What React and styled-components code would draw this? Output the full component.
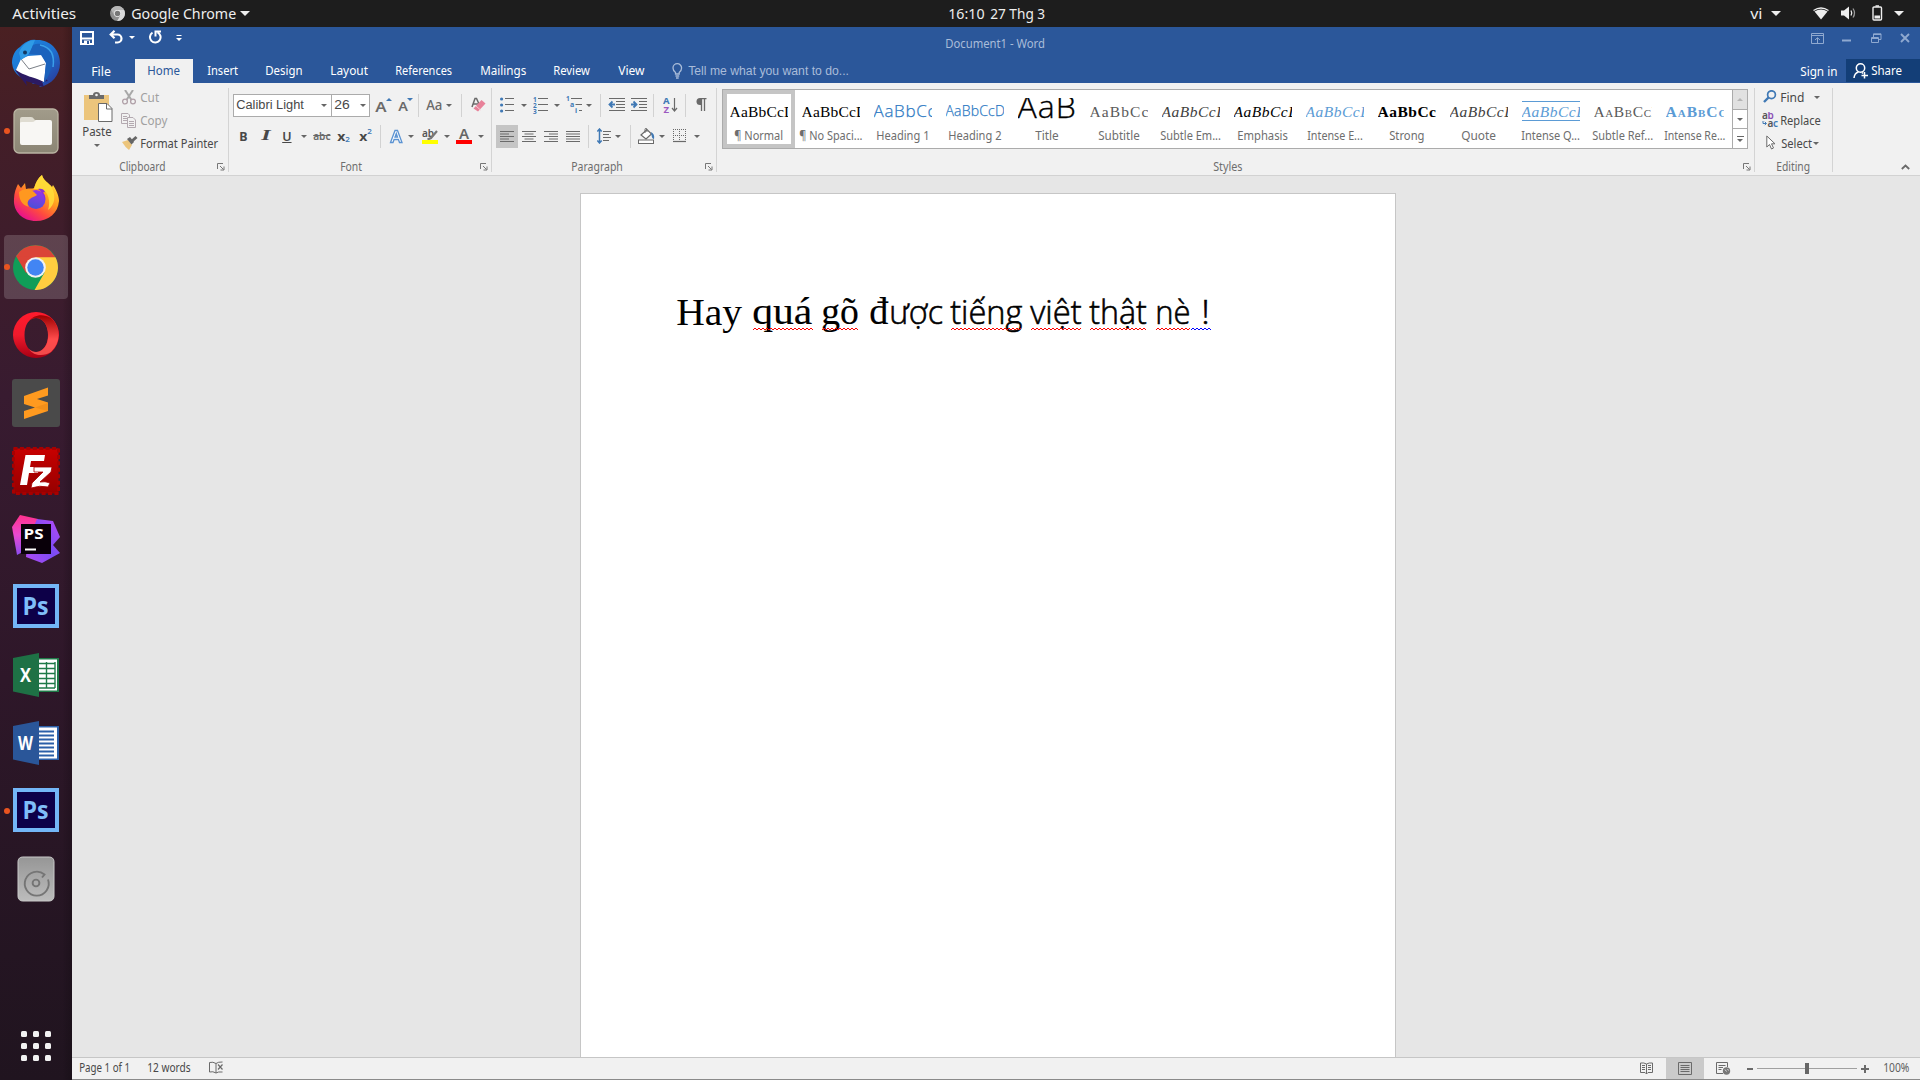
import React, { useLayoutEffect, useRef, useState } from "react";
import styled, { createGlobalStyle, css } from "styled-components";

const UI = '"Noto Sans", "Open Sans", sans-serif';
const SERIF = '"Liberation Serif", serif';
const LIGHT = '"Open Sans", "Noto Sans", sans-serif';
const SANS = '"Liberation Sans", Arial, sans-serif';

const Global = createGlobalStyle`
  * { box-sizing: border-box; }
  body { margin: 0; background: #e6e6e6; overflow: hidden; }
`;

/* ---------- shared pieces ---------- */
const Screen = styled.div`
  width: 1920px;
  height: 1080px;
  display: flex;
  flex-direction: column;
  overflow: hidden;
  font-family: ${UI};
  font-size: 12px;
`;

const LabelBox = styled.span`
  display: inline-block;
  flex: none;
  width: ${(p) => p.$w}px;
  margin-left: ${(p) => p.$g || 0}px;
  margin-top: ${(p) => p.$mt || 0}px;
  font-family: ${(p) => p.$font || UI};
  font-size: ${(p) => p.$size || 12}px;
  font-weight: ${(p) => p.$weight || 400};
  font-style: ${(p) => (p.$italic ? "italic" : "normal")};
  text-decoration: ${(p) => p.$deco || "none"};
  color: ${(p) => p.$color || "#484848"};
  line-height: ${(p) => p.$lh || 18}px;
  -webkit-text-stroke: ${(p) => p.$stroke || 0}px currentColor;
  white-space: pre;
`;
const LabelText = styled.span`
  display: inline-block;
  text-decoration: inherit;
  transform-origin: 0 50%;
`;

/* Text condensed or widened to fill the given width, side bearings hanging out. */
const BEARING = 0.8;
function Label({ children, ...rest }) {
  const ref = useRef(null);
  const [scale, setScale] = useState(1);
  useLayoutEffect(() => {
    if (ref.current.offsetWidth) setScale((rest.$w + 2 * BEARING) / ref.current.offsetWidth);
  }, [rest.$w, children]);
  return (
    <LabelBox {...rest}>
      <LabelText ref={ref} style={{ transform: `translateX(-${BEARING}px) scaleX(${scale})` }}>{children}</LabelText>
    </LabelBox>
  );
}

const Svg = styled.svg`
  display: block;
  flex: none;
  width: ${(p) => p.$w}px;
  height: ${(p) => p.$h}px;
  margin-left: ${(p) => p.$g || 0}px;
  margin-top: ${(p) => p.$mt || 0}px;
`;
function Icon({ w, h, g, mt, children, box }) {
  return (
    <Svg $w={w} $h={h} $g={g} $mt={mt} viewBox={box || `0 0 ${w} ${h}`} fill="none">
      {children}
    </Svg>
  );
}

const Caret = styled.i`
  flex: none;
  width: 0;
  height: 0;
  margin-left: ${(p) => p.$g || 0}px;
  margin-top: ${(p) => p.$mt || 0}px;
  border: solid transparent;
  border-width: ${(p) => p.$s || 3}px ${(p) => p.$s || 3}px 0;
  border-top-color: ${(p) => p.$c || "#666"};
`;
const UpCaret = styled(Caret)`
  transform: rotate(180deg);
`;
const PasteCaret = styled(Caret)`
  display: block;
  margin: 3px 0 0 11px;
`;

/* ---------- desktop top bar ---------- */
const TopBar = styled.header`
  flex: none;
  height: 27px;
  display: flex;
  align-items: center;
  background: #1d1d1d;
`;

const Body = styled.div`
  flex: 1;
  display: flex;
  min-height: 0;
`;

/* ---------- dock ---------- */
const Dock = styled.nav`
  flex: none;
  width: 72px;
  padding: 4px 4px 0;
  display: flex;
  flex-direction: column;
  gap: 4px;
  background: linear-gradient(90deg, transparent 62px, rgba(0, 0, 0, 0.18)),
    linear-gradient(#4a2022 0, #431e28 10%, #381b30 35%, #2e1729 62%, #241522 88%, #20141f 100%);
`;
const Tile = styled.div`
  position: relative;
  flex: none;
  width: 64px;
  height: 64px;
  display: flex;
  align-items: center;
  justify-content: center;
  border-radius: 4px;
  background: ${(p) => (p.$on ? "rgba(255,255,255,.17)" : "transparent")};
  &::before {
    content: "";
    display: ${(p) => (p.$run ? "block" : "none")};
    position: absolute;
    left: 0;
    top: 29px;
    width: 6px;
    height: 6px;
    border-radius: 50%;
    background: #e95420;
  }
`;
const AppsTile = styled(Tile)`
  margin-top: 99px;
`;

const Thunderbird = () => (
  <Icon w={48} h={48} mt={-1}>
    <defs>
      <linearGradient id="tb" x1="0" y1="0" x2="1" y2="1">
        <stop offset="0" stopColor="#1c8be0" /><stop offset=".55" stopColor="#1f6fd0" /><stop offset="1" stopColor="#2a2f8f" />
      </linearGradient>
    </defs>
    <path d="M10 6C15 2 19 0 24 1 37 0 48 10 48 24 48 36 40 46 27 48L31 44 20 45 23 42C11 41 1 36 0 24 0 17 3 11 8 8Z" fill="url(#tb)" />
    <path d="M3 31 15 47 14 42 32 48 30 43 36 42 30 36Z" fill="#2b1a63" />
    <path d="M9 20 16 17 30 16 34 24 32 43C22 38 12 37 4 31Z" fill="#fff" />
    <path d="M9 20 17 30 33 25" stroke="#6a6f78" strokeWidth=".9" />
    <path d="M7 14C10 5 17 1 23 1L21 6C19 12 17 16 12 19L9 21Z" fill="#2f9be6" />
    <path d="M21 6C31 2 40 9 40 20 40 28 38 36 32 44L34 24 29 16 17 15Z" fill="#1b62bd" />
    <path d="M28 6C38 8 43 15 41 28" stroke="#3aa0ea" strokeWidth="1.500" />
    <circle cx="13" cy="13.500" r="2" fill="#123a63" />
  </Icon>
);
const Files = () => (
  <Icon w={46} h={46}>
    <defs>
      <linearGradient id="fl" x1="0" y1="0" x2="0" y2="1"><stop offset="0" stopColor="#a19b8a" /><stop offset="1" stopColor="#8b8574" /></linearGradient>
    </defs>
    <rect x="1" y="1" width="44" height="44" rx="5" fill="url(#fl)" stroke="#bab4a2" strokeWidth="1.300" />
    <path d="M7 12V11Q7 9 9 9H18Q20 9 21 11L22 12H37V20H7Z" fill="#dfdcd1" />
    <path d="M7 15Q7 14 9 14H19Q21 14 22 12.700L23 12H37Q39 12 39 14V35Q39 37 37 37H9Q7 37 7 35Z" fill="#f8f7f4" />
  </Icon>
);
const Firefox = () => (
  <Icon w={48} h={48} mt={-3}>
    <defs>
      <linearGradient id="ff" x1=".85" y1=".1" x2=".25" y2=".95"><stop offset="0" stopColor="#ffe53b" /><stop offset=".4" stopColor="#ff9a1f" /><stop offset=".7" stopColor="#ff4b3e" /><stop offset="1" stopColor="#e8128a" /></linearGradient>
      <linearGradient id="fg" x1=".7" y1="0" x2=".4" y2="1"><stop offset="0" stopColor="#9a35e8" /><stop offset="1" stopColor="#4a50d8" /></linearGradient>
    </defs>
    <path d="M6 10 9 14 13 9 14 15C17 14 20 15 22 14 24 8 26 4 30 1 31 6 37 9 40 13L41 11C45 17 47 23 47 27 46 39 37 47 24 47 11 47 1 38 2 25 2 19 4 14 6 10Z" fill="url(#ff)" />
    <path d="M22 15C24 8 26 4 30 1 31 7 37 9 40 14 44 22 43 31 36 36 39 27 36 18 30 15Z" fill="#ffdc38" opacity=".9" />
    <circle cx="24" cy="25.500" r="9.500" fill="url(#fg)" />
    <path d="M26 15C29 14 32 15 33 18L31 18.500Q34 22 33 26 31 18 26 15Z" fill="#8c30d8" />
    <path d="M7 18C12 14 18 14 22 18L25 21C22 23 20 23 18 25 15 27 15 31 17 33 10 31 7 26 7 18Z" fill="#ff9820" />
  </Icon>
);
const Chrome = ({ size = 45, grey, g }) => (
  <Icon w={size} h={size} box="0 0 48 48" g={g}>
    <circle cx="24" cy="24" r="24" fill={grey ? "#8f8f8f" : "#109d58"} />
    <path d="M24 24 3.300 12A24 24 0 0 1 45 13Z" fill={grey ? "#b5b5b5" : "#db4437"} />
    <path d="M24 13H45.300A24 24 0 0 1 23 48L33.500 29.500Z" fill={grey ? "#dadada" : "#ffcd40"} />
    <path d="M3.300 12 14 30 24 13Z" fill={grey ? "#b5b5b5" : "#db4437"} />
    <circle cx="24" cy="24" r="11" fill="#f1f1f1" />
    <circle cx="24" cy="24" r="8.800" fill={grey ? "#777" : "#4285f4"} />
  </Icon>
);
const Opera = () => (
  <Icon w={48} h={48} mt={-1}>
    <defs>
      <linearGradient id="oa" x1="0" y1="0" x2="0" y2="1"><stop offset="0" stopColor="#ff1b2d" /><stop offset=".5" stopColor="#f01a2c" /><stop offset="1" stopColor="#a70014" /></linearGradient>
      <linearGradient id="ob" x1="0" y1="0" x2="0" y2="1"><stop offset="0" stopColor="#9c0000" /><stop offset=".6" stopColor="#ff4b4b" /><stop offset="1" stopColor="#f04b4b" /></linearGradient>
    </defs>
    <path fillRule="evenodd" d="M24 1A23 23 0 1 0 24 47 23 23 0 1 0 24 1ZM24 7C31 7 36 14 36 24S31 41 24 41 12.500 34 12.500 24 17 7 24 7Z" fill="url(#oa)" />
    <path d="M17 10C21 4 31 2 39 7A23 23 0 0 1 39 41C33 45 22 46 17 38 21 42 27 42 31 38 38 32 38 16 31 10 27 6 21 6 17 10Z" fill="url(#ob)" />
  </Icon>
);
const Sublime = () => (
  <Icon w={48} h={48}>
    <rect width="48" height="48" rx="3" fill="#4a4a4a" />
    <path d="M12 17 36 8.500V16.500L25 20 36 23.500V32L12 40V32L23 28.500 12 25Z" fill="#ff9a1f" />
    <path d="M23 28.500 36 24V32L32 31Z" fill="#d97a10" opacity=".35" />
  </Icon>
);
const FileZilla = () => (
  <Icon w={48} h={48}>
    <defs><linearGradient id="fz" x1="0" y1="0" x2="0" y2="1"><stop offset="0" stopColor="#c80000" /><stop offset="1" stopColor="#960000" /></linearGradient></defs>
    <rect x="1.500" y="1.500" width="45" height="45" fill="url(#fz)" stroke="#a80000" strokeWidth="3" strokeDasharray="4 2.430" />
    <path d="M13.500 8H33L32 14H19L18 20H27L26 26H17L15 38H8Z" fill="#fff" />
    <path d="M22 20H40L39 25 28 35Q33 34 38 36L36 40Q28 38 19 41L20 36 31 25H22Z" fill="#fff" stroke="#a80000" strokeWidth=".8" />
  </Icon>
);
const PhpStorm = () => (
  <Icon w={48} h={48}>
    <defs>
      <linearGradient id="p1" x1="0" y1="0" x2="0" y2="1"><stop offset="0" stopColor="#ff318c" /><stop offset=".5" stopColor="#e84ad0" /><stop offset="1" stopColor="#8b4cf0" /></linearGradient>
      <linearGradient id="p2" x1="1" y1="0" x2="0" y2="1"><stop offset="0" stopColor="#b74af7" /><stop offset=".5" stopColor="#7a4cf5" /><stop offset="1" stopColor="#b24af0" /></linearGradient>
    </defs>
    <path d="M0 12 8 0 26 4 24 30 5 40Z" fill="url(#p1)" />
    <path d="M25 4 41 6 48 22 41 30 48 38 30 48 14 42 15 28Z" fill="url(#p2)" />
    <rect x="9" y="9" width="30" height="30" fill="#090009" />
    <text x="11.500" y="24" fontFamily="Open Sans, sans-serif" fontWeight="700" fontSize="15" textLength="20" lengthAdjust="spacingAndGlyphs" fill="#fff">PS</text>
    <path d="M13 34.500H24" stroke="#fff" strokeWidth="2" />
  </Icon>
);
const Photoshop = () => (
  <Icon w={46} h={44} mt={-2}>
    <rect x="2" y="2" width="42" height="40" fill="#0d0048" stroke="#73b6f7" strokeWidth="4" />
    <text x="9.500" y="30.500" fontFamily="Open Sans, sans-serif" fontWeight="700" fontSize="25" textLength="26" lengthAdjust="spacingAndGlyphs" fill="#7fbdf9">Ps</text>
  </Icon>
);
const Office = ({ color, dark, letter, grid }) => (
  <Icon w={46} h={44}>
    <rect x="20" y="5" width="26" height="34" fill={color} />
    <rect x="24" y="6.500" width="20" height="31" fill="#fff" />
    {grid ? (
      <>
        <path d="M26 10.500H42M26 15.500H42M26 20.500H42M26 25.500H42M26 30.500H42M26 35H42" stroke={color} strokeWidth="1.400" />
        <path d="M33.500 9V35M42 9V35" stroke={color} strokeWidth="1.400" />
      </>
    ) : (
      <path d="M24 10.500H41M24 14.500H41M24 18.500H41M24 22.500H41M24 26.500H41M24 30.500H41M24 34.500H41" stroke={color} strokeWidth="2" />
    )}
    <path d="M0 5 26 0V44L0 38.500Z" fill={dark} />
    <text x={grid ? 7 : 5} y="29" fontFamily="Open Sans, sans-serif" fontWeight="700" fontSize="20" textLength={grid ? 11 : 15} lengthAdjust="spacingAndGlyphs" fill="#fff">{letter}</text>
  </Icon>
);
const Disk = () => (
  <Icon w={38} h={46}>
    <defs><linearGradient id="dk" x1="0" y1="0" x2="0" y2="1"><stop offset="0" stopColor="#969696" /><stop offset="1" stopColor="#bcbcbc" /></linearGradient></defs>
    <rect x="1" y="1" width="36" height="44" rx="4.500" fill="url(#dk)" stroke="#c9c9c9" />
    <path d="M31 23.500A12 12 0 1 1 27.500 18.500L25 21.500" stroke="#757575" strokeWidth="1.900" />
    <circle cx="19" cy="27" r="3.400" stroke="#757575" strokeWidth="1.900" />
  </Icon>
);
const AppGrid = () => (
  <Icon w={30} h={30}>
    {[0, 12, 24].map((y) => [0, 12, 24].map((x) => <rect key={`${x}-${y}`} x={x} y={y} width="6" height="6" rx="1.500" fill="#f2f2f2" />))}
  </Icon>
);

/* ---------- Word window ---------- */
const Window = styled.main`
  flex: 1;
  min-width: 0;
  display: flex;
  flex-direction: column;
  background: #e6e6e6;
`;
const Head = styled.div`
  flex: none;
  height: 56px;
  background: #2b579a;
  display: flex;
  flex-direction: column;
`;
const TitleRow = styled.div`
  height: 32px;
  display: flex;
  align-items: flex-start;
  padding-left: 8px;
`;
const TabRow = styled.div`
  height: 24px;
  display: flex;
  align-items: center;
`;
const ActiveTab = styled.div`
  width: 58px;
  height: 24px;
  margin-left: 24.5px;
  padding-left: 13px;
  display: flex;
  align-items: center;
  background: #f1f1f1;
`;
const ShareButton = styled.div`
  width: 74px;
  height: 23px;
  margin: 0 0 1px 10px;
  padding-left: 7px;
  display: flex;
  align-items: center;
  background: #133e77;
`;
const Ribbon = styled.div`
  flex: none;
  height: 93px;
  display: flex;
  background: #f1f1f1;
  border-bottom: 1px solid #d2d2d2;
`;
const Group = styled.section`
  flex: none;
  width: ${(p) => p.$w}px;
  display: flex;
  flex-direction: column;
  padding-top: 7px;
  background: linear-gradient(#d4d4d4, #d4d4d4) right 0 top 5px / 1px 84px no-repeat;
`;
const Row = styled.div`
  flex: none;
  height: ${(p) => p.$h || 30}px;
  padding-left: ${(p) => p.$pl || 0}px;
  margin-top: ${(p) => p.$mt || 0}px;
  display: flex;
  align-items: center;
`;
const Foot = styled.div`
  height: 17px;
  margin-top: auto;
  padding-left: ${(p) => p.$pl}px;
  display: flex;
  align-items: center;
`;
const Sep = styled.i`
  flex: none;
  width: 1px;
  height: 23px;
  margin-left: ${(p) => p.$g}px;
  background: #d2d2d2;
`;
const Combo = styled.div`
  flex: none;
  width: ${(p) => p.$w}px;
  height: 23px;
  margin-left: ${(p) => p.$g || 0}px;
  padding-left: 3px;
  display: flex;
  align-items: center;
  background: #fff;
  border: 1px solid #ababab;
`;
const Pressed = styled.div`
  flex: none;
  width: 22px;
  height: 23px;
  display: flex;
  align-items: center;
  justify-content: center;
  background: #c5c5c5;
`;
const ClipBody = styled.div`
  display: flex;
  height: 69px;
  margin-top: -4px;
`;
const PasteCol = styled.div`
  width: 45px;
  padding: 5px 0 0 11px;
`;
const Launcher = ({ g }) => (
  <Icon w={8} h={8} g={g}>
    <path d="M.5 6V.5H6M3 3 6.500 6.500M7 3.500V7H3.500" stroke="#777" />
  </Icon>
);

const Gallery = styled.div`
  display: flex;
  width: 1026px;
  height: 60px;
  margin: -1px 0 0 5px;
  border: 1px solid #ababab;
  background: #fff;
`;
const Style = styled.div`
  width: 72px;
  height: 58px;
  flex: none;
  padding: ${(p) => (p.$on ? "4px 3px" : "8px 7px")};
  border: ${(p) => (p.$on ? "4px solid #c5c5c5" : "0")};
`;
const Sample = styled.div`
  width: 58px;
  height: 23px;
  overflow: hidden;
  white-space: pre;
  text-indent: -0.5px;
  color: ${(p) => p.$c || "#000"};
  font-family: ${(p) => (p.$serif ? SERIF : LIGHT)};
  font-size: ${(p) => p.$s || 15.5}px;
  line-height: ${(p) => p.$l || 28.5}px;
  font-weight: ${(p) => p.$wt || (p.$serif ? 400 : 300)};
  font-style: ${(p) => (p.$i ? "italic" : "normal")};
  letter-spacing: ${(p) => p.$ls || 0}px;
  font-variant: ${(p) => (p.$sc ? "small-caps" : "normal")};
  -webkit-text-stroke: ${(p) => p.$st || 0}px currentColor;
  ${(p) => p.$lines && css`
    background: linear-gradient(#5b9bd5, #5b9bd5) 0 3px / 58px 1px no-repeat,
      linear-gradient(#5b9bd5, #5b9bd5) 0 22px / 58px 1px no-repeat;
  `}
`;
const StyleName = styled.div`
  width: 58px;
  margin: 6px 0 0 -0.5px;
  display: flex;
  justify-content: center;
`;
const Scroller = styled.div`
  width: 15px;
  margin-left: auto;
  display: flex;
  flex-direction: column;
  border-left: 1px solid #ababab;
`;
const ScrollButton = styled.div`
  flex: 1;
  display: flex;
  flex-direction: column;
  gap: 2px;
  align-items: center;
  justify-content: center;
  background: ${(p) => (p.$off ? "#e1e1e1" : "#fff")};
  border-top: ${(p) => (p.$off ? "0" : "1px solid #ababab")};
`;
const Dash = styled.i`
  width: 7px;
  height: 1px;
  background: #666;
`;

const Canvas = styled.div`
  flex: 1;
  min-height: 0;
  display: flex;
  padding: 17px 0 0 508px;
`;
const Page = styled.article`
  width: 816px;
  border: 1px solid #c6c6c6;
  border-bottom: 0;
  background: #fff;
  padding: 95px 0 0 96px;
`;
const Line = styled.div`
  display: flex;
  align-items: flex-start;
`;
const Word = styled.span`
  position: relative;
  flex: none;
  display: flex;
  margin-left: ${(p) => p.$g || 0}px;
`;
const Squiggle = styled.svg`
  position: absolute;
  left: ${(p) => p.$x || 0}px;
  top: 38px;
  height: 4px;
  width: ${(p) => p.$w}px;
`;
function Wave({ w, x, color = "#f00" }) {
  let d = "M0 3";
  for (let i = 2; i <= w; i += 2) d += `L${i} ${i % 4 ? 1 : 3}`;
  return <Squiggle $w={w} $x={x}><path d={d} fill="none" stroke={color} strokeWidth="1" /></Squiggle>;
}
const SerifRun = (p) => <Label $lh={46} $size={37} $font={SERIF} $color="#000" {...p} />;
const SansRun = (p) => <Label $lh={46} $size={33} $font={LIGHT} $weight={300} $stroke={0.6} $color="#000" {...p} />;

const Status = styled.footer`
  flex: none;
  height: 23px;
  display: flex;
  align-items: center;
  background: #f1f1f1;
  border-top: 1px solid #c6c6c6;
  border-bottom: 1px solid #8a8a8a;
`;
const ViewOn = styled.div`
  width: 38px;
  height: 21px;
  margin-left: 12px;
  display: flex;
  align-items: center;
  justify-content: center;
  background: #cacaca;
`;
const Track = styled.div`
  width: 100px;
  height: 1px;
  margin-left: 4px;
  background: #a0a0a0;
  display: flex;
  align-items: center;
  justify-content: center;
`;
const Thumb = styled.i`
  flex: none;
  width: 4px;
  height: 11px;
  background: #666;
`;
const Fill = styled.span`
  flex: 1;
`;

const G = "#6a6a6a";
const B = "#4079b5";

const STYLES = [
  { n: "¶ Normal", w: 47, t: { $serif: true, $ls: 0.2 }, on: true },
  { n: "¶ No Spaci...", w: 62, t: { $serif: true, $ls: 0.2 } },
  { n: "Heading 1", w: 52, t: { $c: "#2e7ac4", $s: 17, $l: 26, $ls: 0.7, $st: 0.25 } },
  { n: "Heading 2", w: 52, t: { $c: "#2e7ac4", $s: 14, $l: 26, $ls: 0.2, $st: 0.25 } },
  { n: "Title", w: 22, t: { $s: 32, $l: 15, $ls: 1, $st: 0.35 } },
  { n: "Subtitle", w: 40, t: { $serif: true, $c: "#5a5a5a", $ls: 1.1 } },
  { n: "Subtle Em...", w: 59, t: { $serif: true, $i: true, $c: "#404040", $ls: 0.5 } },
  { n: "Emphasis", w: 49, t: { $serif: true, $i: true, $ls: 0.5 } },
  { n: "Intense E...", w: 54, t: { $serif: true, $i: true, $c: "#5b9bd5", $ls: 0.5 } },
  { n: "Strong", w: 34, t: { $serif: true, $wt: 700, $ls: 0.5 } },
  { n: "Quote", w: 33, t: { $serif: true, $i: true, $c: "#404040", $ls: 0.5 } },
  { n: "Intense Q...", w: 57, t: { $serif: true, $i: true, $c: "#5b9bd5", $lines: true, $ls: 0.5 } },
  { n: "Subtle Ref...", w: 59, t: { $serif: true, $sc: true, $c: "#5a5a5a", $ls: 0.6 } },
  { n: "Intense Re...", w: 60, t: { $serif: true, $sc: true, $c: "#5b9bd5", $wt: 700, $ls: 1 } },
];

const Lines = ({ rows, g }) => (
  <Icon w={14} h={13} g={g}>
    {rows.map(([a, b], i) => <path key={i} d={`M${a} ${i * 2.5 + 1.5}H${b}`} stroke={G} strokeWidth="1" />)}
  </Icon>
);

function ClipboardGroup() {
  return (
    <Group $w={157}>
      <ClipBody>
        <PasteCol>
          <Icon w={30} h={31} g={1} mt={1}>
            <rect x="0" y="3" width="25" height="25" fill="#ecc57c" />
            <path d="M5 7V3H9Q9 0 12.500 0T16 3H20V7Z" fill="#6a6a6a" />
            <circle cx="12.500" cy="3" r="1.300" fill="#f1f1f1" />
            <path d="M14.500 11.500H23L28 16.500V29.500H14.500Z" fill="#fff" stroke="#6a6a6a" />
            <path d="M22.500 11.500V17H28" stroke="#6a6a6a" />
          </Icon>
          <Label $w={28} $lh={18}>Paste</Label>
          <PasteCaret />
        </PasteCol>
        <div>
          <Row $h={23} $pl={5}>
            <Icon w={14} h={15}>
              <path d="M3 0 9.500 10M11 0 4.500 10" stroke="#a8a8a8" strokeWidth="2" />
              <circle cx="3" cy="11.500" r="2.400" stroke="#b0a0a8" strokeWidth="1.300" /><circle cx="11" cy="11.500" r="2.400" stroke="#b0a0a8" strokeWidth="1.300" />
            </Icon>
            <Label $g={5} $w={17} $color="#a0a0a0">Cut</Label>
          </Row>
          <Row $h={23} $pl={4}>
            <Icon w={16} h={15}>
              <path d="M.5.5H7L8.500 2V10.500H.5ZM2 3.500H6M2 5.500H6M2 7.500H6" stroke="#b3a9b0" />
              <path d="M6.500 4.500H12L14.500 7V14.500H6.500Z" fill="#f1f1f1" stroke="#b3a9b0" /><path d="M8 8.500H13M8 10.500H13M8 12.500H13" stroke="#b3a9b0" />
            </Icon>
            <Label $g={4} $w={25.5} $color="#a0a0a0">Copy</Label>
          </Row>
          <Row $h={23} $pl={5}>
            <Icon w={16} h={14} mt={-2}>
              <path d="M0 6 6 4 10 9 7 14Q3 11 0 6Z" fill="#ecc57c" />
              <path d="M5 3 8 1 12 6 9.500 8.500Z" fill="#666" /><path d="M9 4 13.500 0 15.500 2 11 6Z" fill="#666" />
            </Icon>
            <Label $g={3} $w={76}>Format Painter</Label>
          </Row>
        </div>
      </ClipBody>
      <Foot $pl={47.5}><Label $w={45} $color="#6e6e6e">Clipboard</Label><Launcher g={52} /></Foot>
    </Group>
  );
}

function FontGroup() {
  return (
    <Group $w={263}>
      <Row $pl={4}>
        <Combo $w={99}><Label $w={66} $size={12.5} $font={SANS}>Calibri Light</Label><Caret $g={17.5} /></Combo>
        <Combo $w={39} $g={-1}><Label $w={14} $size={12.5} $font={SANS}>26</Label><Caret $g={10.5} /></Combo>
        <Label $g={6} $w={10} $size={14.5} $weight={600} $color={G} $mt={2}>A</Label>
        <UpCaret $c={B} $mt={-11} />
        <Label $g={6.5} $w={8} $size={12} $weight={600} $color={G} $mt={4}>A</Label>
        <Caret $c={B} $mt={-11} />
        <Sep $g={5.5} />
        <Label $g={8} $w={15} $size={13.5} $weight={500} $color={G}>Aa</Label>
        <Caret $g={4} />
        <Sep $g={8.5} />
        <Icon w={15} h={16} g={9}>
          <path d="M1 10 4 1.500H5.500L8.500 8M2.500 7H7" stroke={G} strokeWidth="1.500" />
          <path d="M2.500 11.500 10.500 3 14.500 6.500 7 14.500Z" fill="#e8829a" />
          <path d="M5 9 9.500 13" stroke="#f6c8d2" />
        </Icon>
      </Row>
      <Row $pl={11} $mt={1}>
        <Label $w={7} $weight={700} $size={13}>B</Label>
        <Label $g={15} $w={7} $weight={700} $italic $size={14} $font={SERIF}>I</Label>
        <Label $g={14} $w={8} $weight={600} $size={13} $deco="underline">U</Label>
        <Caret $g={10} />
        <Label $g={7} $w={16} $size={11.5} $weight={600} $color={G} $deco="line-through">abc</Label>
        <Label $g={8} $w={7} $size={13} $weight={700}>x</Label><Label $g={1} $w={3} $size={7} $color={B} $weight={600} $mt={8}>2</Label>
        <Label $g={11} $w={7} $size={13} $weight={700}>x</Label><Label $g={1} $w={3} $size={7} $color={B} $weight={600} $mt={-8}>2</Label>
        <Sep $g={9} />
        <Icon w={15} h={15} g={8}>
          <path d="M1.500 13.500 6 1.500H8.500L13 13.500H10.500L9.400 10.500H5.100L4 13.500ZM6 8H8.500L7.300 4.500Z" fill="#fff" stroke="#5b93d2" strokeWidth="1.300" />
        </Icon>
        <Caret $g={4} />
        <Icon w={16} h={17} g={7.5}>
          <text x="0" y="8.500" fontFamily="Noto Sans, sans-serif" fontWeight="600" fontSize="10" fill="#555">ab</text>
          <path d="M15 3 9 10 5.500 11.500" stroke="#777" strokeWidth="2.200" />
          <rect y="12" width="16" height="4" fill="#ff0" />
        </Icon>
        <Caret $g={6} />
        <Icon w={16} h={17} g={6.5}>
          <text x="3" y="11" fontFamily="Noto Sans, sans-serif" fontWeight="600" fontSize="15" fill="#666">A</text>
          <rect y="12" width="16" height="4" fill="#f00" />
        </Icon>
        <Caret $g={6} />
      </Row>
      <Foot $pl={112}><Label $w={20} $color="#6e6e6e">Font</Label><Launcher g={119} /></Foot>
    </Group>
  );
}

function ParagraphGroup() {
  return (
    <Group $w={225}>
      <Row $pl={8}>
        <Icon w={14} h={16}>
          {[2, 8, 14].map((y) => <g key={y}><circle cx="1.600" cy={y} r="1.600" fill={B} /><path d={`M5 ${y - 0.5}H14`} stroke={G} /></g>)}
        </Icon>
        <Caret $g={6.5} />
        <Icon w={15} h={18} g={6.5}>
          {[2, 8, 14].map((y, i) => <g key={y}><text x="0" y={y + 3.5} fontSize="6.500" fontWeight="700" fontFamily="Noto Sans, sans-serif" fill={B}>{i + 1}</text><path d={`M5 ${y + 0.5}H15`} stroke={G} /></g>)}
        </Icon>
        <Caret $g={6} />
        <Icon w={17} h={18} g={6}>
          <text x="0" y="5" fontSize="6.500" fontWeight="700" fontFamily="Noto Sans, sans-serif" fill={B}>1</text>
          <text x="4" y="11" fontSize="7" fontWeight="700" fontFamily="Noto Sans, sans-serif" fill={B}>a</text>
          <text x="9" y="17" fontSize="7" fontWeight="700" fontFamily="Noto Sans, sans-serif" fill={B}>i</text>
          <path d="M5 2.500H16M9.500 8.500H16M13 14.500H16" stroke={G} />
        </Icon>
        <Caret $g={3} />
        <Sep $g={8} />
        <Icon w={17} h={14} g={7}>
          <path d="M1 .5H17M8 3.500H17M8 6.500H17M8 9.500H17M1 12.500H17" stroke={G} /><path d="M7 6.500H2M4.500 3.500 1.500 6.500 4.500 9.500" stroke={B} strokeWidth="1.800" />
        </Icon>
        <Icon w={17} h={14} g={5}>
          <path d="M1 .5H17M9 3.500H17M9 6.500H17M9 9.500H17M1 12.500H17" stroke={G} /><path d="M1 6.500H6M3.500 3.500 6.500 6.500 3.500 9.500" stroke={B} strokeWidth="1.800" />
        </Icon>
        <Sep $g={6} />
        <Icon w={15} h={18} g={8.5}>
          <text x="0" y="8" fontSize="9.500" fontWeight="700" fontFamily="Noto Sans, sans-serif" fill={B}>A</text>
          <text x="0.500" y="16.500" fontSize="9.500" fontWeight="700" fontFamily="Noto Sans, sans-serif" fill="#9b59c0">Z</text>
          <path d="M11.500 2V15M9 12 11.500 15 14 12" stroke={G} strokeWidth="1.200" />
        </Icon>
        <Sep $g={7.5} />
        <Icon w={11} h={14} g={9.5}>
          <path d="M5 .5H10.500M5.500 0V13M8.500 0V13" stroke={G} strokeWidth="1.300" /><path d="M6 0H4A3.500 3.500 0 0 0 4 7H6Z" fill={G} />
        </Icon>
      </Row>
      <Row $pl={4} $mt={1}>
        <Pressed><Lines rows={[[0, 14], [0, 9], [0, 14], [0, 9], [0, 14]]} /></Pressed>
        <Lines g={4} rows={[[0, 14], [2.5, 11.5], [0, 14], [2.5, 11.5], [0, 14]]} />
        <Lines g={8} rows={[[0, 14], [5, 14], [0, 14], [5, 14], [0, 14]]} />
        <Lines g={8} rows={[[0, 14], [0, 14], [0, 14], [0, 14], [0, 14]]} />
        <Sep $g={8} />
        <Icon w={15} h={16} g={8}>
          <path d="M2.500 1V15M.3 3.500 2.500 1 4.700 3.500M.3 12.500 2.500 15 4.700 12.500" stroke={B} strokeWidth="1.500" />
          <path d="M6 3.500H14M6 6.500H12M6 9.500H14M6 12.500H12" stroke={G} />
        </Icon>
        <Caret $g={3} />
        <Sep $g={9} />
        <Icon w={17} h={16} g={7}>
          <rect x=".5" y="12" width="15" height="3.500" fill="#fff" stroke={G} />
          <path d="M3 7 9 1.500 13.500 6 8 11Z" fill="#fff" stroke={G} strokeWidth="1.200" /><path d="M7 5V1.500Q7 0 8.500 .5L9 4" stroke={G} />
          <path d="M13 4Q17 6 16 11 14 11 13.500 7Z" fill={B} />
        </Icon>
        <Caret $g={4} />
        <Icon w={14} h={14} g={8}>
          <path d="M.5 0V12M6.500 0V12M12.500 0V12M0 .5H13M0 6.500H13" stroke={G} strokeDasharray="1 1" /><path d="M0 12.500H13" stroke={G} strokeWidth="1.200" />
        </Icon>
        <Caret $g={6.5} />
      </Row>
      <Foot $pl={79.5}><Label $w={50} $color="#6e6e6e">Paragraph</Label><Launcher g={83.5} /></Foot>
    </Group>
  );
}

function StylesGroup() {
  return (
    <Group $w={1038}>
      <Gallery>
        {STYLES.map((s) => (
          <Style key={s.n} $on={s.on}>
            <Sample {...s.t}>AaBbCcDd</Sample>
            <StyleName><Label $w={s.w} $color="#6e6e6e">{s.n}</Label></StyleName>
          </Style>
        ))}
        <Scroller>
          <ScrollButton $off><UpCaret $c="#b5b5b5" /></ScrollButton>
          <ScrollButton><Caret /></ScrollButton>
          <ScrollButton><Dash /><Caret /></ScrollButton>
        </Scroller>
      </Gallery>
      <Foot $pl={497}><Label $w={28} $color="#6e6e6e">Styles</Label><Launcher g={501} /></Foot>
    </Group>
  );
}

function EditingGroup() {
  return (
    <Group $w={78}>
      <Row $h={23} $mt={-4} $pl={8}>
        <Icon w={14} h={13} mt={-3}><circle cx="8.500" cy="4.700" r="3.900" stroke={B} strokeWidth="1.700" /><path d="M5.500 7.500 1 12" stroke={B} strokeWidth="2.400" /></Icon>
        <Label $g={4} $w={22.5}>Find</Label><Caret $g={10} />
      </Row>
      <Row $h={23} $pl={7}>
        <Icon w={17} h={17}>
          <text x="0" y="7" fontSize="10" fontWeight="600" fontFamily="Noto Sans, sans-serif" fill="#555">a</text>
          <text x="5.500" y="7" fontSize="10" fontWeight="600" fontFamily="Noto Sans, sans-serif" fill="#8a4fb5">b</text>
          <text x="5.500" y="15" fontSize="10" fontWeight="600" fontFamily="Noto Sans, sans-serif" fill="#555">a</text>
          <text x="11" y="15" fontSize="10" fontWeight="600" fontFamily="Noto Sans, sans-serif" fill={B}>c</text>
          <path d="M1 9V11.500H4M2.800 9.800 4.500 11.500 2.800 13" stroke={B} />
        </Icon>
        <Label $g={2} $w={39}>Replace</Label>
      </Row>
      <Row $h={23} $pl={11}>
        <Icon w={10} h={15} mt={-3}><path d="M.8 1V12L3.500 9.500 5.500 14 7.500 13 5.500 8.800H9Z" fill="#fff" stroke={G} /></Icon>
        <Label $g={6} $w={29}>Select</Label><Caret $g={2} />
      </Row>
      <Foot $pl={22}><Label $w={32} $color="#6e6e6e">Editing</Label></Foot>
    </Group>
  );
}

const Collapse = styled.div`
  flex: 1;
  display: flex;
  align-items: flex-end;
  justify-content: flex-end;
  padding: 0 10px 5px 0;
`;

const TABS = [["Insert", 15, 29], ["Design", 29, 35.5], ["Layout", 29.5, 36], ["References", 29, 55], ["Mailings", 30, 44], ["Review", 29, 35], ["View", 30, 24.5]];
const W1 = "#a9bcd9";
const C1 = "#8fa9d0";

export default function App() {
  return (
    <Screen>
      <Global />
      <TopBar>
        <Label $g={12.5} $w={62} $size={14} $color="#eee">Activities</Label>
        <Chrome size={15} grey g={35.5} />
        <Label $g={6.5} $w={103} $size={14} $color="#eee">Google Chrome</Label>
        <Caret $g={5.5} $s={5} $c="#eee" />
        <Label $g={698.5} $w={35} $size={14} $color="#eee">16:10</Label>
        <Label $g={7.5} $w={53} $size={14} $color="#eee">27 Thg 3</Label>
        <Label $g={707} $w={11} $size={14} $color="#eee">vi</Label>
        <Caret $g={9} $s={5} $c="#eee" />
        <Icon w={16} h={13} g={31.5}>
          <path d="M8 12.500 1.500 4.500Q8 .5 14.500 4.500Z" fill="#eee" /><path d="M.5 3.500Q8-1.500 15.500 3.500" stroke="#eee" strokeWidth="1.300" />
        </Icon>
        <Icon w={16} h={14} g={12} mt={-1}>
          <path d="M0 4.500H3L8 .5V13.500L3 9.500H0Z" fill="#eee" /><path d="M10 4.500Q11.500 7 10 9.500" stroke="#eee" strokeWidth="1.300" /><path d="M12 2.500Q15 7 12 11.500" stroke="#999" strokeWidth="1.300" />
        </Icon>
        <Icon w={11} h={16} g={15} mt={-2}>
          <rect x="1" y="2" width="8.500" height="13" rx="1" stroke="#eee" strokeWidth="1.400" /><path d="M3.500 1H7" stroke="#eee" strokeWidth="1.500" /><rect x="2.500" y="10.500" width="5.500" height="3" fill="#eee" />
        </Icon>
        <Caret $g={11.5} $s={5} $c="#eee" />
      </TopBar>
      <Body>
        <Dock>
          <Tile><Thunderbird /></Tile>
          <Tile $run><Files /></Tile>
          <Tile><Firefox /></Tile>
          <Tile $on $run><Chrome g={-1} /></Tile>
          <Tile><Opera /></Tile>
          <Tile><Sublime /></Tile>
          <Tile><FileZilla /></Tile>
          <Tile><PhpStorm /></Tile>
          <Tile><Photoshop /></Tile>
          <Tile><Office color="#1f7a48" dark="#1e7145" letter="X" grid /></Tile>
          <Tile><Office color="#2b5fa8" dark="#2a5699" letter="W" /></Tile>
          <Tile $run><Photoshop /></Tile>
          <Tile><Disk /></Tile>
          <AppsTile><AppGrid /></AppsTile>
        </Dock>
        <Window>
          <Head>
            <TitleRow>
              <Icon w={14} h={14} mt={4}><path d="M1 1H13V13H1Z" stroke="#fff" strokeWidth="2" /><path d="M1 7.500H13" stroke="#fff" strokeWidth="2" /><path d="M4 13V9.500H10V13" fill="#fff" /><path d="M7 10H9V13H7Z" fill="#2b579a" /></Icon>
              <Icon w={15} h={14} g={15} mt={3}><path d="M2 4.500H8.500A4 4 0 0 1 8.500 12.500H6M5.500 .8 1.700 4.500 5.500 8.200" stroke="#fff" strokeWidth="2.200" /></Icon>
              <Caret $g={4.5} $mt={9} $c="#fff" />
              <Icon w={14} h={14} g={13.5} mt={3}><path d="M4.500 2.700A5.300 5.300 0 1 0 9.500 2.400M7.500 6.500V1.500H13" stroke="#fff" strokeWidth="2" /></Icon>
              <Icon w={6} h={8} g={14} mt={7}><path d="M.5 1.500H5.500" stroke="#fff" /><path d="M0 4H6L3 7Z" fill="#fff" /></Icon>
              <Label $g={763.5} $mt={8} $w={98} $color={W1}>Document1 - Word</Label>
              <Icon w={14} h={11} g={767} mt={6}><path d="M.5.5H12.500V10.500H.5ZM.5 2.500H12.500M6.500 10V5M4 7 6.500 4.700 9 7" stroke={C1} /></Icon>
              <Icon w={10} h={3} g={17} mt={12}><path d="M0 1.500H9" stroke={C1} strokeWidth="2" /></Icon>
              <Icon w={11} h={11} g={19} mt={6}><path d="M.5 4.500H7.500V9.500H.5ZM.5 5.500H7.500M2.500 4V.8H10V6.500H8M3 1.500H10" stroke={C1} /></Icon>
              <Icon w={10} h={10} g={18} mt={6}><path d="M1 1 9 9M9 1 1 9" stroke={C1} strokeWidth="1.900" /></Icon>
            </TitleRow>
            <TabRow>
              <Label $g={20} $w={18} $mt={2} $color="#fff">File</Label>
              <ActiveTab><Label $w={31} $color="#2b579a">Home</Label></ActiveTab>
              {TABS.map(([t, g, w]) => <Label key={t} $g={g} $w={w} $color="#fff">{t}</Label>)}
              <Icon w={11} h={16} g={29} mt={-1}><path d="M3.500 11V9.500Q1 7.500 1 5A4.300 4.300 0 0 1 9.600 5Q9.600 7.500 7.200 9.500V11ZM3.500 13H7.200M4 15H6.700" stroke={W1} strokeWidth="1.300" /></Icon>
              <Label $g={5.5} $w={159.5} $size={12.5} $font={SANS} $color={W1}>Tell me what you want to do...</Label>
              <Fill />
              <Label $w={35.5} $mt={2} $color="#fff">Sign in</Label>
              <ShareButton>
                <Icon w={16} h={16}><circle cx="7.500" cy="5" r="4.200" stroke="#fff" strokeWidth="1.500" /><path d="M1 15Q1.500 10 5.500 9M9 9.500 10 10.500M11.500 9V15.500M8.500 12.500H15" stroke="#fff" strokeWidth="1.500" /></Icon>
                <Label $g={3} $w={29} $color="#fff">Share</Label>
              </ShareButton>
            </TabRow>
          </Head>
          <Ribbon>
            <ClipboardGroup />
            <FontGroup />
            <ParagraphGroup />
            <StylesGroup />
            <EditingGroup />
            <Collapse><Icon w={9} h={6}><path d="M.8 5 4.500 1.500 8.200 5" stroke={G} strokeWidth="1.800" /></Icon></Collapse>
          </Ribbon>
          <Canvas>
            <Page>
              <Line>
                <Word><SerifRun $w={64} $size={38}>Hay</SerifRun></Word>
                <Word $g={12}><SerifRun $w={58} $stroke={0.15}>quá</SerifRun><Wave w={60} /></Word>
                <Word $g={11}><SerifRun $w={36} $stroke={0.15}>gõ</SerifRun><Wave w={37} /></Word>
                <Word $g={12}>
                  <SerifRun $w={18} $stroke={0.15}>đ</SerifRun>
                  <SansRun $g={2} $w={52}>ược</SansRun>
                </Word>
                <Word $g={9}><SansRun $w={70.5}>tiếng</SansRun><Wave w={71} /></Word>
                <Word $g={9}><SansRun $w={50}>việt</SansRun><Wave w={51} /></Word>
                <Word $g={9.5}><SansRun $w={56}>thật</SansRun><Wave w={57} /></Word>
                <Word $g={10}><SansRun $w={34}>nè</SansRun><Wave w={35} /></Word>
                <Word $g={11.5}><SansRun $w={7}>!</SansRun><Wave w={20} x={-11} color="#00f" /></Word>
              </Line>
            </Page>
          </Canvas>
          <Status>
            <Label $g={7.5} $w={49.5} $mt={-1}>Page 1 of 1</Label>
            <Label $g={18.5} $w={41.5} $mt={-1}>12 words</Label>
            <Icon w={15} h={13} g={19.5} mt={-2}><path d="M7 2.500Q4 .5 .5 1.500V11Q4 10 7 12ZM7 2.500Q9 .8 13.500 1M7 12Q9 10.500 13.500 11" stroke={G} /><path d="M9 3.500 13.500 8.500M13.500 3.500 9 8.500" stroke={G} strokeWidth="1.200" /></Icon>
            <Fill />
            <Icon w={14} h={13} mt={-1}><path d="M6.500 2Q4 .5 .5 1V10.500H5L6.500 12 8 10.500H12.500V1Q9 .5 6.500 2V12M2 3.500H5M2 5.500H5M2 7.500H5M8 3.500H11M8 5.500H11M8 7.500H11" stroke={G} /></Icon>
            <ViewOn><Icon w={14} h={13} mt={-1}><path d="M.5.5H13.500V12.500H.5ZM2.500 3.500H11.500M2.500 5.500H11.500M2.500 7.500H11.500M2.500 9.500H11.500" stroke={G} /></Icon></ViewOn>
            <Icon w={15} h={13} g={12} mt={-1}><path d="M7 11.500H.5V.5H11.500V5M2.500 3.500H9.500M2.500 5.500H7M2.500 7.500H5.500" stroke={G} /><circle cx="10.500" cy="9" r="3.700" fill="#777" /><path d="M9 7.500 10.500 9.500M11.500 7 12.500 8.500" stroke="#ddd" /></Icon>
            <Icon w={6} h={2} g={16}><path d="M0 1H6" stroke={G} strokeWidth="2" /></Icon>
            <Track><Thumb /></Track>
            <Icon w={8} h={8} g={4}><path d="M0 4H8M4 0V8" stroke={G} strokeWidth="2" /></Icon>
            <Label $g={15} $w={25} $mt={-1} $color="#606060">100%</Label>
            <Icon w={11} h={1} />
          </Status>
        </Window>
      </Body>
    </Screen>
  );
}
